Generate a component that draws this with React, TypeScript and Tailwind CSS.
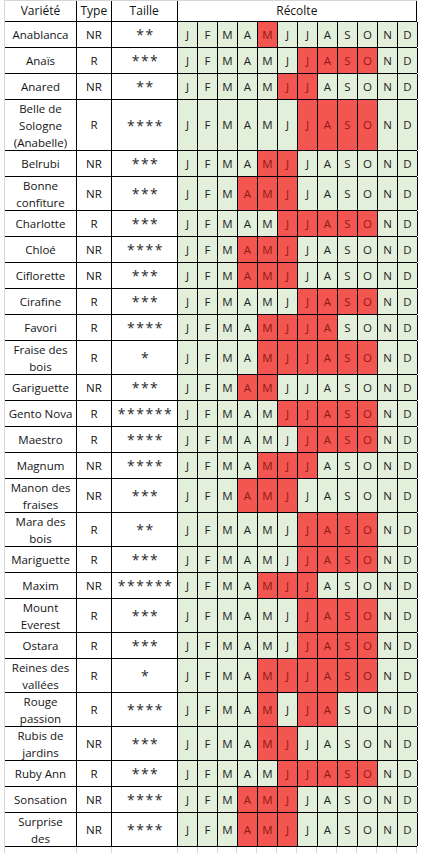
import React from "react";

const MONTHS = ["J", "F", "M", "A", "M", "J", "J", "A", "S", "O", "N", "D"];

type Row = { name: string[]; type: string; stars: string; red: string; h: number };

const S = 26;
const D = 34;

const ROWS: Row[] = [
  { name: ["Anablanca"], type: "NR", stars: "**", red: "000010000000", h: S },
  { name: ["Anaïs"], type: "R", stars: "***", red: "000000111100", h: S },
  { name: ["Anared"], type: "NR", stars: "**", red: "000001100000", h: S },
  { name: ["Belle de", "Sologne", "(Anabelle)"], type: "R", stars: "****", red: "000000111100", h: 51 },
  { name: ["Belrubi"], type: "NR", stars: "***", red: "000011000000", h: S },
  { name: ["Bonne", "confiture"], type: "NR", stars: "***", red: "000111000000", h: D },
  { name: ["Charlotte"], type: "R", stars: "***", red: "000001111100", h: S },
  { name: ["Chloé"], type: "NR", stars: "****", red: "000111000000", h: S },
  { name: ["Ciflorette"], type: "NR", stars: "***", red: "000111000000", h: S },
  { name: ["Cirafine"], type: "R", stars: "***", red: "000000111100", h: S },
  { name: ["Favori"], type: "R", stars: "****", red: "000011110000", h: S },
  { name: ["Fraise des", "bois"], type: "R", stars: "*", red: "000011111100", h: D },
  { name: ["Gariguette"], type: "NR", stars: "***", red: "000110000000", h: S },
  { name: ["Gento Nova"], type: "R", stars: "******", red: "000001111100", h: S },
  { name: ["Maestro"], type: "R", stars: "****", red: "000000111100", h: S },
  { name: ["Magnum"], type: "NR", stars: "****", red: "000011100000", h: S },
  { name: ["Manon des", "fraises"], type: "NR", stars: "***", red: "000111000000", h: D },
  { name: ["Mara des", "bois"], type: "R", stars: "**", red: "000000111100", h: D },
  { name: ["Mariguette"], type: "R", stars: "***", red: "000000111100", h: S },
  { name: ["Maxim"], type: "NR", stars: "******", red: "000011100000", h: S },
  { name: ["Mount", "Everest"], type: "R", stars: "***", red: "000000111100", h: D },
  { name: ["Ostara"], type: "R", stars: "***", red: "000000111100", h: S },
  { name: ["Reines des", "vallées"], type: "R", stars: "*", red: "000011111100", h: D },
  { name: ["Rouge", "passion"], type: "R", stars: "****", red: "000010110000", h: D },
  { name: ["Rubis de", "jardins"], type: "NR", stars: "***", red: "000011000000", h: D },
  { name: ["Ruby Ann"], type: "R", stars: "***", red: "000001111100", h: S },
  { name: ["Sonsation"], type: "NR", stars: "****", red: "000111000000", h: S },
  { name: ["Surprise", "des"], type: "NR", stars: "****", red: "000111000000", h: D },
];

export default function App() {
  return (
    <div
      className="w-[421px] h-[853px] overflow-hidden bg-white pl-[4px] text-[#141414]"
      style={{ fontFamily: '"Open Sans", "Liberation Sans", sans-serif' }}
    >
      <div className="w-[413px] border-l border-[#d6d6d6]">
        {/* Header */}
        <div className="flex h-[22px] border-t border-[#d6d6d6] border-b border-b-black text-[12px] leading-[20px]">
          <div className="w-[72px] border-r border-black flex items-center justify-center">Variété</div>
          <div className="w-[35px] border-r border-black flex items-center justify-center">Type</div>
          <div className="w-[66px] border-r border-black flex items-center justify-center">Taille</div>
          <div className="w-[240px] border-r border-black flex items-center justify-center">Récolte</div>
        </div>
        {ROWS.map((r, i) => (
          <div key={i} className="flex border-b border-black" style={{ height: r.h }}>
            <div className="w-[72px] shrink-0 border-r border-black flex flex-col items-center justify-center text-[11.5px] leading-[17px] whitespace-nowrap">
              {r.name.map((l, j) => (
                <span key={j}>{l}</span>
              ))}
            </div>
            <div className="w-[35px] shrink-0 border-r border-black flex items-center justify-center text-[11.5px]">
              {r.type}
            </div>
            <div className="w-[66px] shrink-0 border-r border-black flex items-center justify-center text-[14px] tracking-[1.5px] pl-[2px] text-[#2a2a2a]">
              {r.stars}
            </div>
            {MONTHS.map((m, k) => {
              const red = r.red[k] === "1";
              return (
                <div
                  key={k}
                  className={
                    "w-[20px] shrink-0 border-r border-black flex items-center justify-center text-[11.5px] " +
                    (red ? "bg-[#f35550] text-[#8f1a14]" : "bg-[#e2efda] text-[#222]")
                  }
                >
                  {m}
                </div>
              );
            })}
          </div>
        ))}
        {/* Empty grid below */}
        <div className="flex h-[10px]">
          <div className="w-[72px] border-r border-[#d6d6d6]" />
          <div className="w-[35px] border-r border-[#d6d6d6]" />
          <div className="w-[66px] border-r border-[#d6d6d6]" />
          {MONTHS.map((_, k) => (
            <div key={k} className="w-[20px] border-r border-[#d6d6d6]" />
          ))}
        </div>
      </div>
    </div>
  );
}
